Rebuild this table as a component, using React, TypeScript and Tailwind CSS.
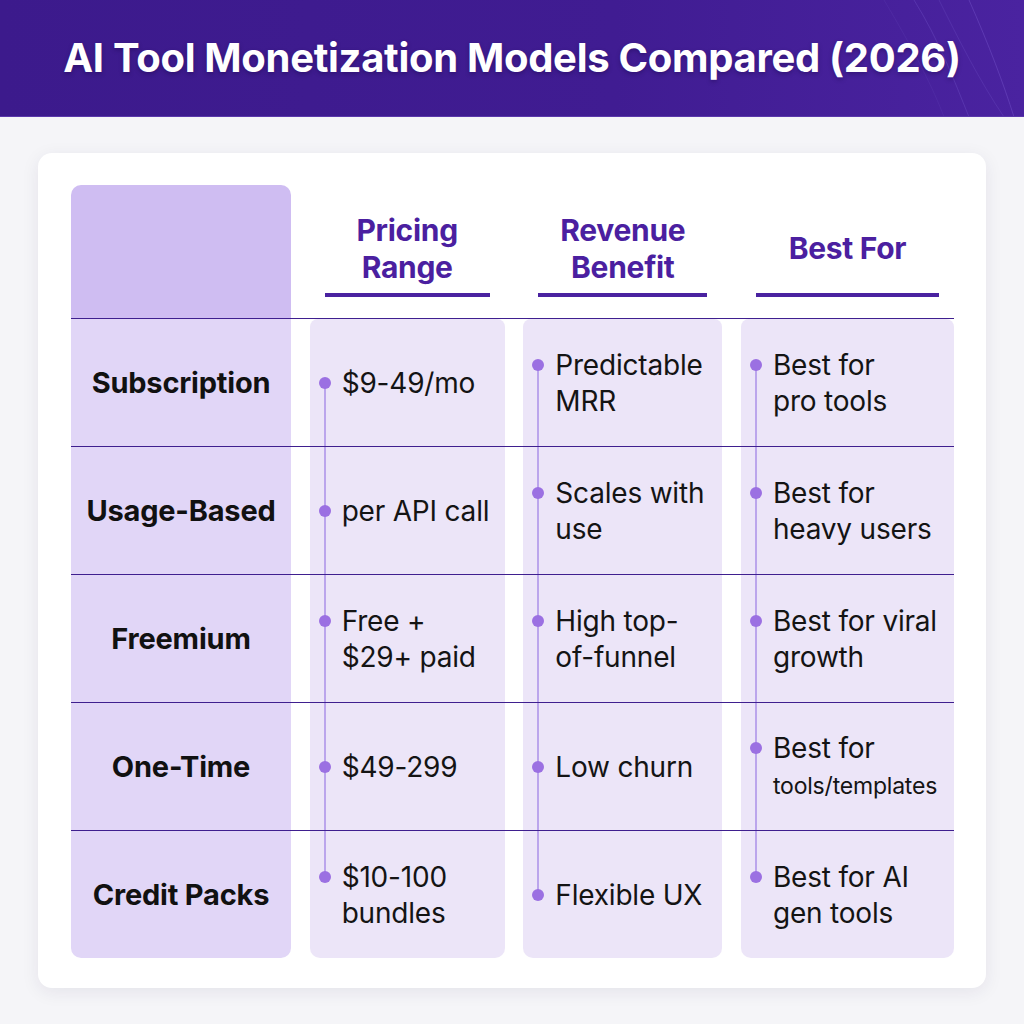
import React from "react";

type Cell = { text: React.ReactNode; lines: 1 | 2 };

interface Row {
  label: string;
  cells: [Cell, Cell, Cell];
}

const rows: Row[] = [
  {
    label: "Subscription",
    cells: [
      { text: "$9-49/mo", lines: 1 },
      { text: <>Predictable<br />MRR</>, lines: 2 },
      { text: <>Best for<br />pro tools</>, lines: 2 }
    ]
  },
  {
    label: "Usage-Based",
    cells: [
      { text: "per API call", lines: 1 },
      { text: <>Scales with<br />use</>, lines: 2 },
      { text: <>Best for<br />heavy users</>, lines: 2 }
    ]
  },
  {
    label: "Freemium",
    cells: [
      { text: <>Free +<br />$29+ paid</>, lines: 2 },
      { text: <>High top-<br />of-funnel</>, lines: 2 },
      { text: <>Best for viral<br />growth</>, lines: 2 }
    ]
  },
  {
    label: "One-Time",
    cells: [
      { text: "$49-299", lines: 1 },
      { text: "Low churn", lines: 1 },
      {
        text: (
          <>
            Best for
            <br />
            <span className="text-[23px]">tools/templates</span>
          </>
        ),
        lines: 2
      }
    ]
  },
  {
    label: "Credit Packs",
    cells: [
      { text: <>$10-100<br />bundles</>, lines: 2 },
      { text: "Flexible UX", lines: 1 },
      { text: <>Best for AI<br />gen tools</>, lines: 2 }
    ]
  }
];

const headers = [
  { label: <>Pricing<br />Range</> },
  { label: <>Revenue<br />Benefit</> },
  { label: "Best For" }
];

// vertical connector drawn as a background stripe behind the dots
function railClass(rowIndex: number, lines: 1 | 2) {
  if (rowIndex === 0) {
    return lines === 1
      ? "bg-[length:2px_63px] bg-[position:14px_100%]"
      : "bg-[length:2px_81px] bg-[position:14px_100%]";
  }
  if (rowIndex === rows.length - 1) {
    return lines === 1
      ? "bg-[length:2px_64px] bg-[position:14px_0]"
      : "bg-[length:2px_47px] bg-[position:14px_0]";
  }
  return "bg-[length:2px_100%] bg-[position:14px_0]";
}

function ValueCell({ cell, rowIndex }: { cell: Cell; rowIndex: number }) {
  const first = rowIndex === 0;
  const last = rowIndex === rows.length - 1;
  return (
    <div
      className={`flex h-full items-center bg-[#ece5f8] bg-[linear-gradient(#bba5ec,#bba5ec)] bg-no-repeat pl-[9px] ${railClass(
        rowIndex,
        cell.lines
      )} ${first ? "rounded-t-[8px]" : ""} ${last ? "rounded-b-[10px]" : ""}`}
    >
      <div className="flex items-start gap-[11px]">
        <span className="mt-[12px] h-[12px] w-[12px] shrink-0 rounded-full bg-[#9b70e2]" />
        <p className="text-[28px] leading-[36px] tracking-[-0.2px] text-[#141414]">{cell.text}</p>
      </div>
    </div>
  );
}

export default function App() {
  return (
    <div className="min-h-[1024px] w-[1024px] bg-[#f5f5f8] font-['Inter','Noto_Sans',sans-serif]">
      <header className="relative flex h-[117px] items-center justify-center overflow-hidden border-b border-[#5a38ab] bg-[linear-gradient(90deg,#3c1a8c,#401c92_60%,#4a23a0)]">
        <svg className="absolute right-0 top-0 h-[117px] w-[260px]" viewBox="0 0 260 117" fill="none">
          <path d="M150 0 C 175 40, 190 80, 205 117" stroke="#6a4bc0" strokeOpacity="0.45" />
          <path d="M175 0 C 195 40, 215 80, 240 117" stroke="#6a4bc0" strokeOpacity="0.35" />
          <path d="M205 0 C 225 45, 240 85, 250 117" stroke="#7a5bd0" strokeOpacity="0.4" />
          <path d="M120 0 C 150 50, 170 90, 180 117" stroke="#6a4bc0" strokeOpacity="0.2" />
        </svg>
        <h1 className="relative text-[40px] font-bold tracking-[-0.3px] text-white [text-shadow:0_2px_4px_rgba(20,0,60,0.35)]">
          AI Tool Monetization Models Compared (2026)
        </h1>
      </header>

      <main className="px-[38px] pt-[36px] pb-[36px]">
        <section className="rounded-[14px] bg-white pl-[33px] pr-[32px] pt-[32px] pb-[30px] shadow-[0_4px_18px_rgba(40,30,80,0.08)]">
          <div className="grid h-[133px] grid-cols-[220px_195px_199px_213px] justify-between">
            <div className="rounded-t-[10px] bg-[#cfbdf2]" />
            {headers.map((h, i) => (
              <div key={i} className="flex flex-col pt-[19px] pb-[21px]">
                <div className="flex flex-1 items-center justify-center">
                  <h3 className="text-center text-[30px] font-bold leading-[37px] tracking-[-0.3px] text-[#4b1fa0]">
                    {h.label}
                  </h3>
                </div>
                <div className="mx-[15px] h-[4px] bg-[#4a22a0]" />
              </div>
            ))}
          </div>

          {rows.map((row, ri) => (
            <div
              key={row.label}
              className="grid h-[128px] grid-cols-[220px_195px_199px_213px] justify-between border-t-[1.5px] border-[#3f1f8f]"
            >
              <div
                className={`flex items-center justify-center bg-[#e1d6f7] ${ri === rows.length - 1 ? "rounded-b-[10px]" : ""}`}
              >
                <p className="text-[29px] font-bold tracking-[-0.2px] text-[#111]">{row.label}</p>
              </div>
              {row.cells.map((cell, ci) => (
                <ValueCell key={ci} cell={cell} rowIndex={ri} />
              ))}
            </div>
          ))}
        </section>
      </main>
    </div>
  );
}
